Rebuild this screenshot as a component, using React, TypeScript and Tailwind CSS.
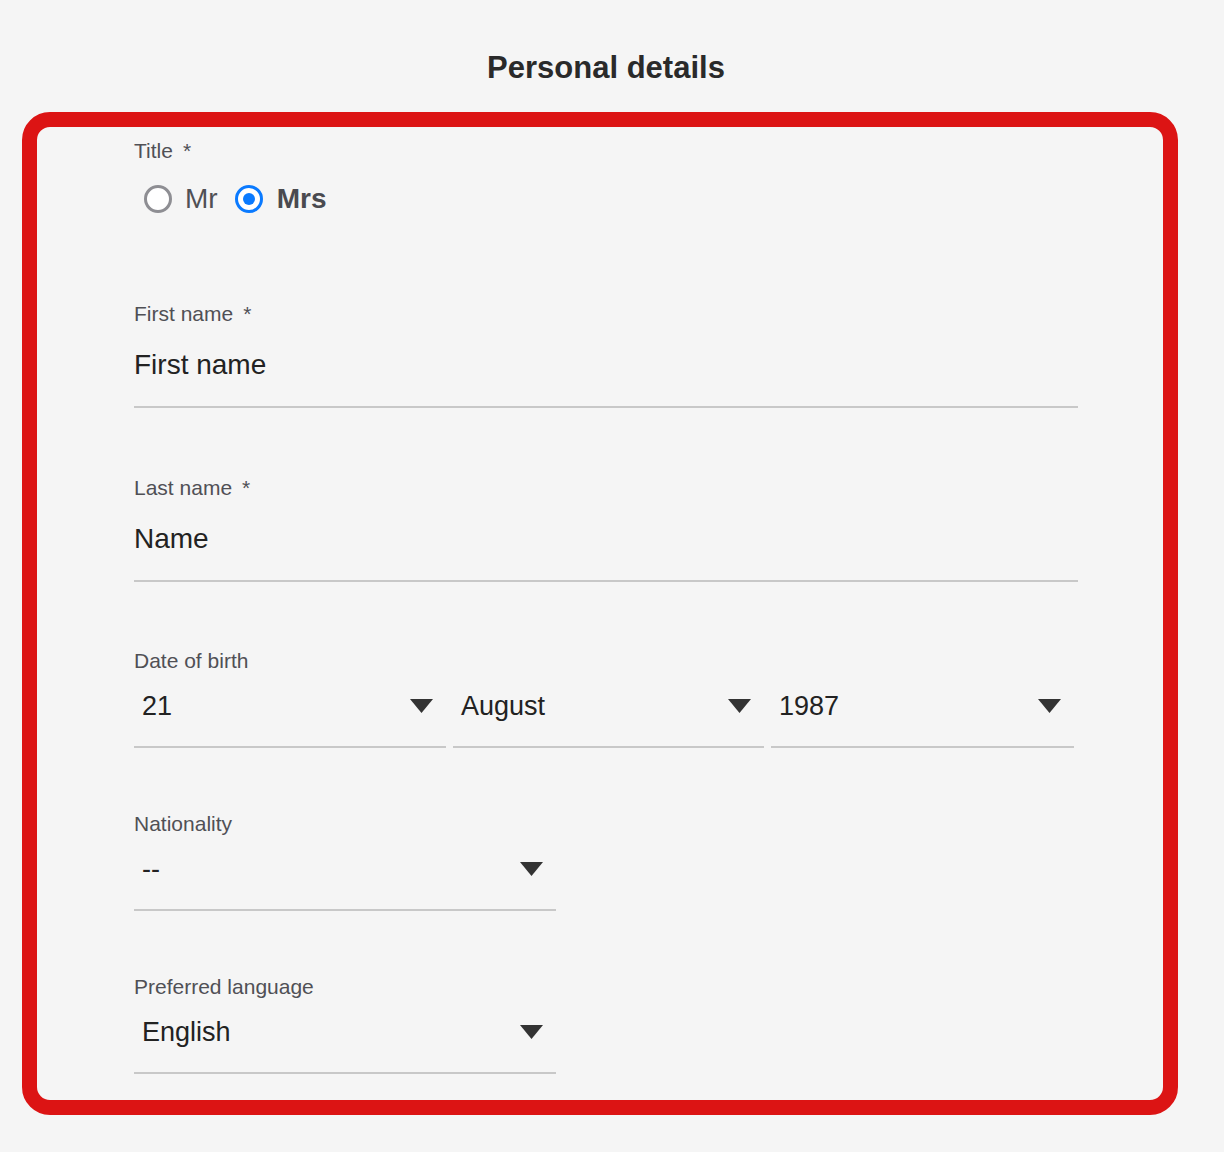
import React from "react";

const font = { fontFamily: '"Liberation Sans", Arial, Helvetica, sans-serif' };

function Arrow() {
  return (
    <svg width="23" height="14" viewBox="0 0 23 14" className="shrink-0">
      <path d="M0 0 L23 0 L11.5 14 Z" fill="#333333" />
    </svg>
  );
}

function Label({ text, required }: { text: string; required?: boolean }) {
  return (
    <div className="text-[21px] leading-[24px] text-[#505055]">
      {text}
      {required && <span className="ml-[10px]">*</span>}
    </div>
  );
}

function TextField({ label, value }: { label: string; value: string }) {
  return (
    <div className="flex flex-col">
      <Label text={label} required />
      <div className="pt-[22px] pb-[24px] border-b-2 border-[#c8c8c8] text-[28px] leading-[34px] text-[#222222]">
        {value}
      </div>
    </div>
  );
}

function Select({ value, className }: { value: string; className: string }) {
  return (
    <div
      className={`flex items-center justify-between pl-2 pr-[13px] pt-[16px] pb-[23px] border-b-2 border-[#c8c8c8] ${className}`}
    >
      <span className="text-[27px] leading-[34px] text-[#222222]">{value}</span>
      <Arrow />
    </div>
  );
}

export default function App() {
  return (
    <div className="min-h-[1152px] w-[1224px] bg-[#f5f5f5]" style={font}>
      <div className="pt-[49px] pr-[12px] text-center text-[31px] leading-[38px] font-bold text-[#2a2a2a]">
        Personal details
      </div>
      <div className="mt-[25px] ml-[22px] w-[1156px] h-[1003px] rounded-[28px] border-[15px] border-[#dc1414] pl-[97px] pt-[12px]">
        <div className="w-[944px] flex flex-col">
          <Label text="Title" required />
          <div className="mt-[18px] ml-[10px] flex items-center h-[36px]">
            <span className="w-[28px] h-[28px] rounded-full border-[3px] border-[#8e8e93] bg-white" />
            <span className="ml-[13px] text-[28px] leading-[34px] text-[#505055]">Mr</span>
            <span className="ml-[17px] w-[28px] h-[28px] rounded-full border-[3px] border-[#0a7aff] bg-white flex items-center justify-center">
              <span className="w-[12px] h-[12px] rounded-full bg-[#0a7aff]" />
            </span>
            <span className="ml-[14px] text-[28px] leading-[34px] font-bold text-[#4a4a4f]">Mrs</span>
          </div>

          <div className="mt-[85px]">
            <TextField label="First name" value="First name" />
          </div>
          <div className="mt-[68px]">
            <TextField label="Last name" value="Name" />
          </div>

          <div className="mt-[67px] flex flex-col">
            <Label text="Date of birth" />
            <div className="flex gap-[7px]">
              <Select value="21" className="w-[312px]" />
              <Select value="August" className="w-[311px]" />
              <Select value="1987" className="w-[303px]" />
            </div>
          </div>

          <div className="mt-[64px] flex flex-col">
            <Label text="Nationality" />
            <Select value="--" className="w-[422px]" />
          </div>

          <div className="mt-[64px] flex flex-col">
            <Label text="Preferred language" />
            <Select value="English" className="w-[422px]" />
          </div>
        </div>
      </div>
    </div>
  );
}
